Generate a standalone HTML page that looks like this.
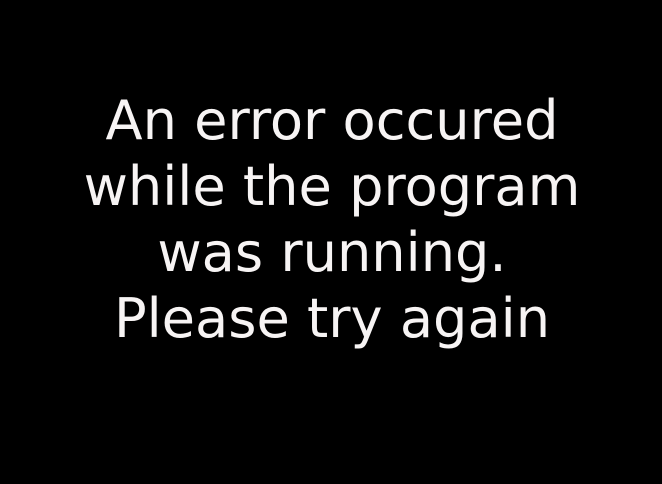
<!DOCTYPE html>
<html><head><style>
html,body{margin:0;padding:0;background:#000;width:662px;height:484px;overflow:hidden}
.t{position:absolute;left:0;width:664px;top:88px;text-align:center;color:#f7f4f4;font-family:"DejaVu Sans",sans-serif;font-size:54.2px;line-height:66px}
</style></head><body>
<div class="t">An error occured<br>while the program<br>was running.<br>Please try again</div>
</body></html>
